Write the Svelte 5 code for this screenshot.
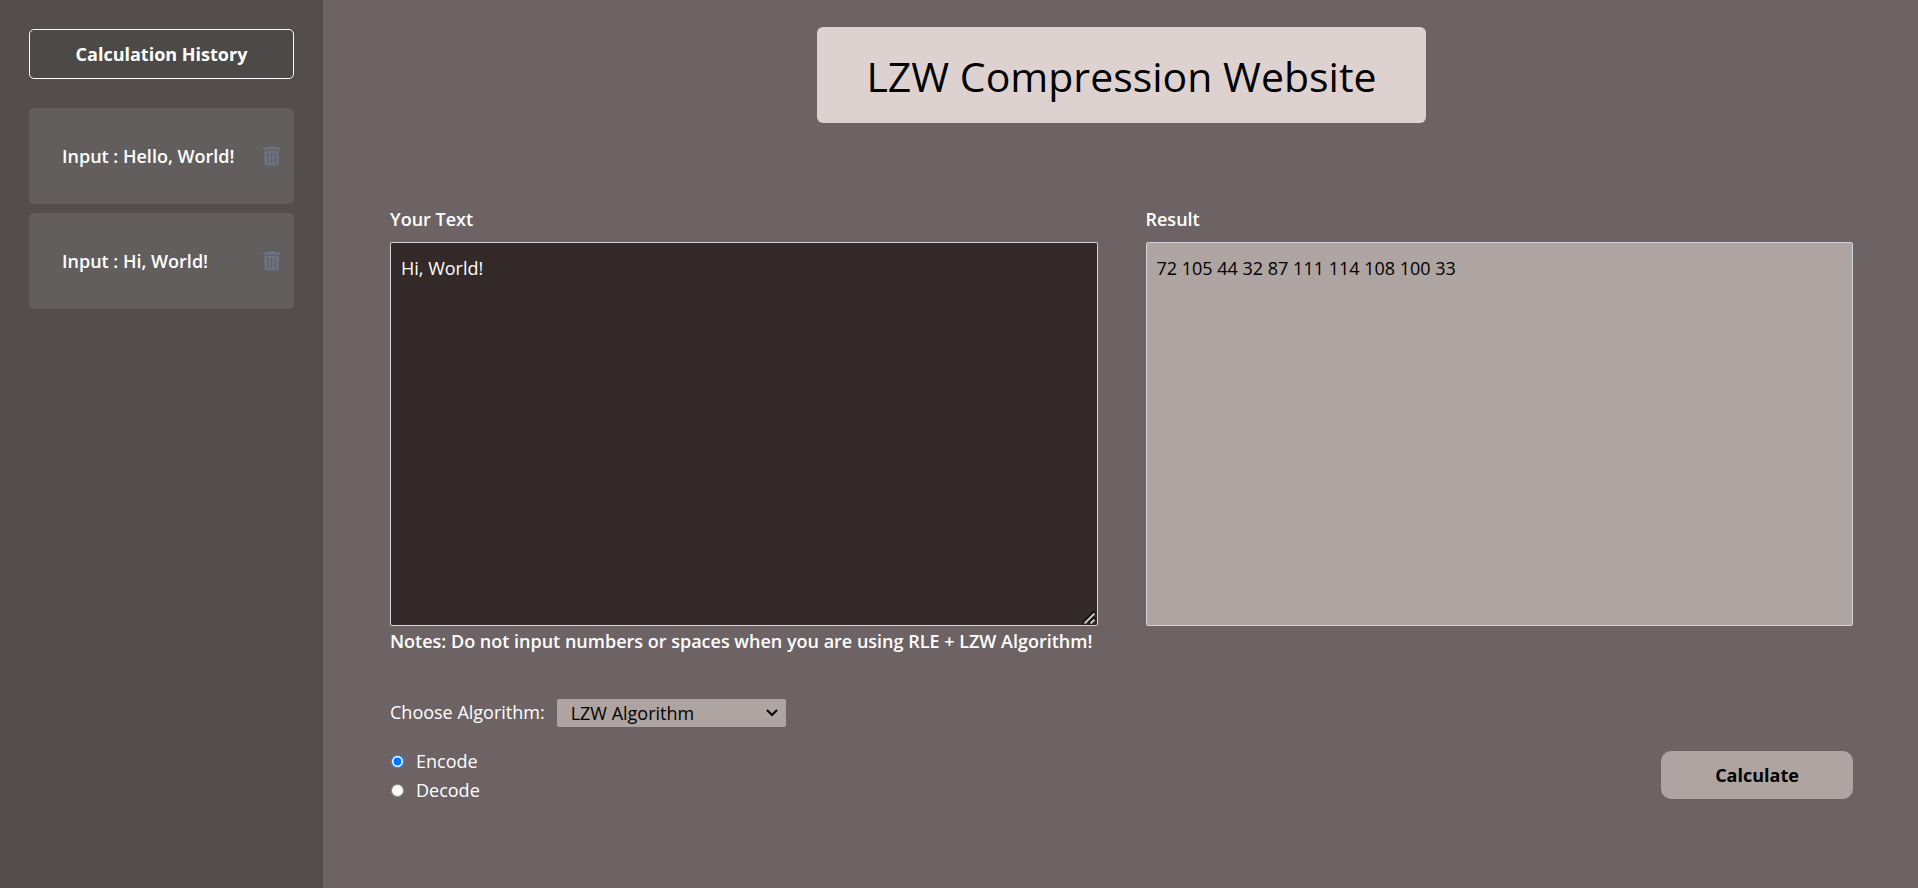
<script>
  let text = $state('Hi, World!');
  let result = $state('72 105 44 32 87 111 114 108 100 33');
  let mode = $state('encode');
  let algorithm = $state('lzw');
  let history = $state(['Hello, World!', 'Hi, World!']);

  function encode(source) {
    const codes = new Map();
    for (let i = 0; i < 256; i++) codes.set(String.fromCharCode(i), i);
    const out = [];
    let word = '';
    for (const ch of source) {
      if (codes.has(word + ch)) {
        word += ch;
      } else {
        out.push(codes.get(word));
        codes.set(word + ch, codes.size);
        word = ch;
      }
    }
    if (word) out.push(codes.get(word));
    return out.join(' ');
  }

  function decode(source) {
    const words = Array.from({ length: 256 }, (_, i) => String.fromCharCode(i));
    let previous = '';
    let out = '';
    for (const code of source.trim().split(/\s+/).map(Number)) {
      const entry = words[code] ?? previous + previous.charAt(0);
      out += entry;
      if (previous) words.push(previous + entry.charAt(0));
      previous = entry;
    }
    return out;
  }

  function runLength(source) {
    return source.replace(/(.)\1*/g, (run, ch) => run.length + ch);
  }

  function expandRuns(source) {
    return source.replace(/(\d+)(\D)/g, (_, count, ch) => ch.repeat(Number(count)));
  }

  function calculate() {
    const rle = algorithm === 'rle';
    if (mode === 'encode') result = encode(rle ? runLength(text) : text);
    else result = rle ? expandRuns(decode(text)) : decode(text);
    history.push(text);
  }

  function remove(index) {
    history.splice(index, 1);
  }
</script>

<div class="page">
  <aside>
    <h2>Calculation History</h2>
    <ul>
      {#each history as item, i}
        <li>
          <span>Input : {item}</span>
          <button class="trash" aria-label="Delete" onclick={() => remove(i)}>
            <svg viewBox="0 0 18 20" width="18" height="20" aria-hidden="true">
              <path d="M5 1.2 6 .3h5l1 .9h4.5q.5 0 .5.5v1.6q0 .5-.5.5H.8q-.5 0-.5-.5V1.700q0-.5.5-.5z" />
              <path fill-rule="evenodd" d="M1.300 4.800h14.600v12.800q0 2-2 2H3.300q-2 0-2-2zM4.200 7v10.200h1.200V7zM8 7v10.200h1.200V7zM11.800 7v10.200H13V7z" />
            </svg>
          </button>
        </li>
      {/each}
    </ul>
  </aside>

  <main>
    <h1>LZW Compression Website</h1>

    <div class="fields">
      <div class="field">
        <label for="source">Your Text</label>
        <textarea id="source" spellcheck="false" bind:value={text}></textarea>
        <p class="note">Notes: Do not input numbers or spaces when you are using RLE + LZW Algorithm!</p>
      </div>
      <div class="field">
        <label for="result">Result</label>
        <textarea id="result" class="result" readonly value={result}></textarea>
      </div>
    </div>

    <div class="algorithm">
      <label for="algorithm">Choose Algorithm:</label>
      <select id="algorithm" bind:value={algorithm}>
        <option value="lzw">LZW Algorithm</option>
        <option value="rle">RLE + LZW Algorithm</option>
      </select>
    </div>

    <div class="actions">
      <div class="modes">
        <label><input type="radio" name="mode" value="encode" bind:group={mode} />Encode</label>
        <label><input type="radio" name="mode" value="decode" bind:group={mode} />Decode</label>
      </div>
      <button class="calculate" onclick={calculate}>Calculate</button>
    </div>
  </main>
</div>

<style>
  :global(body) {
    margin: 0;
    background: #6d6364;
  }

  .page,
  .page * {
    box-sizing: border-box;
  }

  .page {
    display: flex;
    min-height: 100vh;
    font-family: "Open Sans", "Noto Sans", sans-serif;
    font-size: 18px;
    line-height: 29px;
    color: #fff;
  }

  aside {
    flex: none;
    width: 323px;
    padding: 29px;
    background: #534e4c;
  }

  h2 {
    margin: 0 0 29px;
    padding: 10px;
    border: 1px solid #fff;
    border-radius: 5px;
    background: #4c4a48;
    font-size: 18px;
    font-weight: 700;
    line-height: 28px;
    text-align: center;
  }

  ul {
    display: flex;
    flex-direction: column;
    gap: 9px;
    margin: 0;
    padding: 0;
    list-style: none;
  }

  li {
    display: flex;
    align-items: center;
    justify-content: space-between;
    min-height: 96px;
    padding: 0 13px 0 33px;
    border-radius: 5px;
    background: #625e5d;
    font-weight: 600;
  }

  button {
    border: 0;
    font: inherit;
    cursor: pointer;
  }

  .trash {
    display: flex;
    padding: 0;
    background: none;
    color: #6b7280;
  }

  .trash svg {
    fill: currentColor;
  }

  main {
    flex: 1;
    display: flex;
    flex-direction: column;
    min-width: 0;
    padding: 27px 65px 27px 67px;
  }

  h1 {
    align-self: center;
    margin: 0 0 82px;
    padding: 21px 49px 19px;
    border-radius: 6px;
    background: #ded2d1;
    color: #000;
    font-size: 41px;
    font-weight: 400;
    line-height: 56px;
  }

  .fields {
    display: grid;
    grid-template-columns: 1fr 1fr;
    gap: 48px;
  }

  .field {
    display: flex;
    flex-direction: column;
    min-width: 0;
  }

  .field label {
    margin-bottom: 8px;
    font-weight: 600;
  }

  textarea {
    width: 100%;
    height: 384px;
    padding: 10px;
    border: 1px solid #d1d5db;
    border-radius: 2px;
    background: #332928;
    color: #fff;
    font: inherit;
    line-height: 30px;
    outline: 0;
    resize: both;
  }

  textarea::-webkit-resizer {
    background: url("data:image/svg+xml,%3Csvg xmlns='http://www.w3.org/2000/svg' width='15' height='15' fill='none'%3E%3Cpath d='M1.5 13.500 13 2M7 13.500l6-6' stroke='%23120f0f' stroke-width='4'/%3E%3Cpath d='M2.500 13.500 12.500 3.500M8.500 13.500l4-4' stroke='%23c9c5c5' stroke-width='2'/%3E%3C/svg%3E") right bottom no-repeat;
  }

  .result {
    background: #aea4a2;
    color: #000;
    resize: none;
  }

  .note {
    margin: 0;
    font-weight: 600;
    line-height: 31px;
    white-space: nowrap;
  }

  .algorithm {
    display: flex;
    align-items: center;
    gap: 12px;
    margin: 41px 0 20px;
  }

  select {
    appearance: none;
    width: 229px;
    height: 28px;
    padding: 0 28px 0 14px;
    border: 0;
    border-radius: 2px;
    background: #aea4a2 url("data:image/svg+xml,%3Csvg xmlns='http://www.w3.org/2000/svg' width='14' height='10' fill='none' stroke='%23000' stroke-width='2'%3E%3Cpath d='m2 2 5 5 5-5'/%3E%3C/svg%3E") right 7px center no-repeat;
    color: #000;
    font: inherit;
    line-height: 28px;
  }

  .actions {
    display: flex;
    align-items: flex-start;
    justify-content: space-between;
  }

  .modes {
    display: flex;
    flex-direction: column;
  }

  .modes label {
    display: flex;
    align-items: center;
    gap: 11px;
  }

  input {
    width: 13px;
    height: 13px;
    margin: 0 1px;
  }

  .calculate {
    width: 192px;
    height: 48px;
    margin-top: 4px;
    border-radius: 10px;
    background: #aea4a2;
    color: #000;
    font-weight: 700;
  }
</style>
